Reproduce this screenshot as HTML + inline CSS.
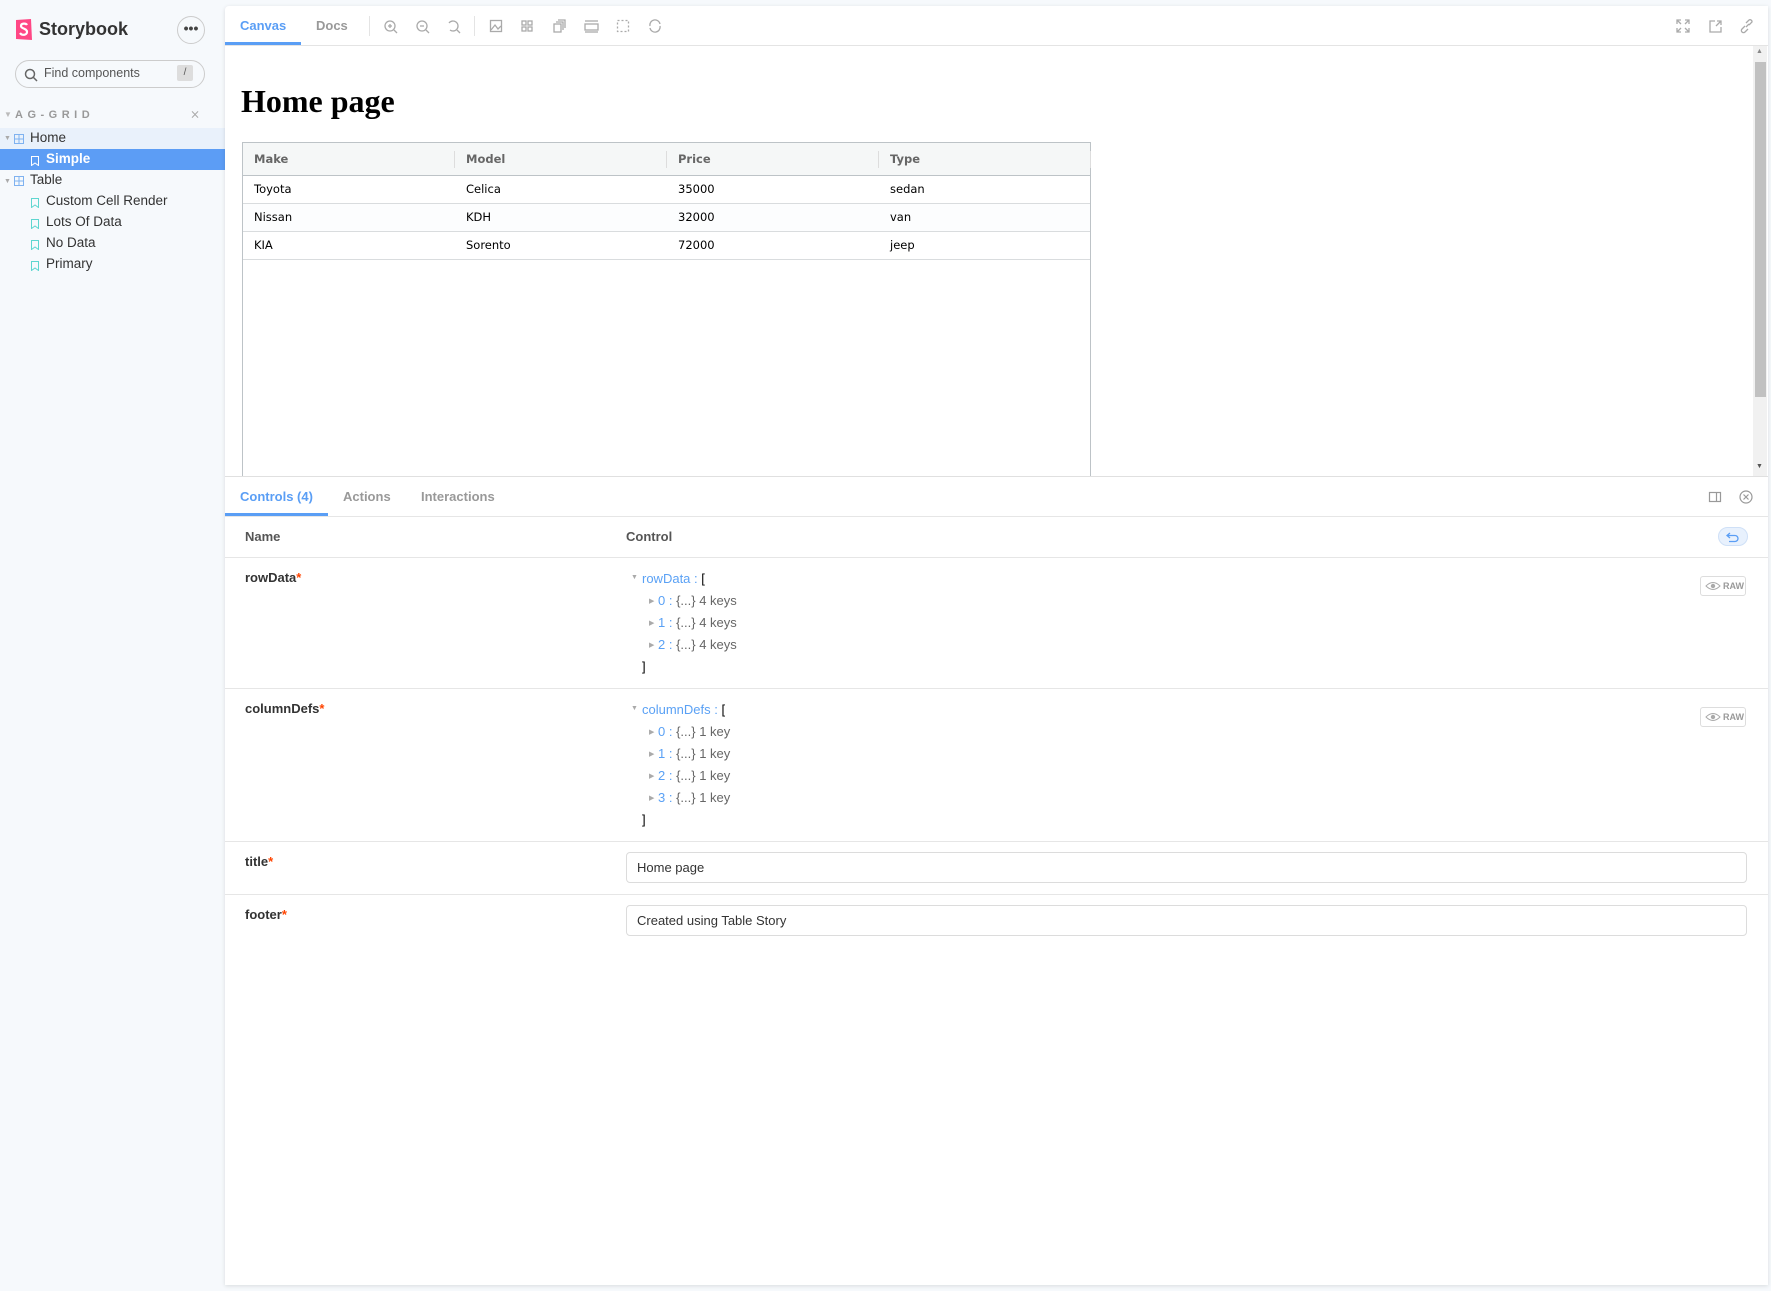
<!DOCTYPE html>
<html><head><meta charset="utf-8"><style>
*{box-sizing:border-box;margin:0;padding:0}
body{width:1771px;height:1291px;background:#f6f9fc;font-family:"Liberation Sans",sans-serif;position:relative;overflow:hidden;color:#333}
.a{position:absolute}
.main{left:225px;top:6px;width:1543px;height:1279px;background:#fff;box-shadow:0 1px 4px rgba(0,0,0,.12);border-radius:4px 0 0 0}
.tb{font-size:13px;font-weight:bold}
.side{font-size:13px;color:#333}
.row{position:absolute;left:0;width:225px;height:21px;line-height:21px}
.grid{left:242px;top:142px;width:849px;height:334px;border:1px solid #bdc3c7;border-bottom:none;font-family:"DejaVu Sans","Liberation Sans",sans-serif;font-size:11.5px;color:#000}
.gh{position:absolute;left:0;top:0;width:847px;height:33px;background:#f5f7f7;border-bottom:1px solid #bdc3c7;color:#666;font-weight:bold}
.gr{position:absolute;left:0;width:847px;height:28px;border-bottom:1px solid #d9dcde;line-height:27px}
.c{position:absolute;top:0}
.lbl{font-size:13px;font-weight:bold;color:#333}
.j{position:absolute;font-size:13px;color:#666;white-space:nowrap}
.k{color:#5aa1f5}
.sep{position:absolute;left:225px;width:1543px;height:1px;background:#e6e6e6}
.inp{position:absolute;left:626px;width:1121px;height:31px;border:1px solid #dcdcdc;border-radius:4px;font-size:13px;line-height:29px;padding-left:10px;color:#333}
</style></head><body>
<svg class="a" style="left:15px;top:19px" width="18" height="22" viewBox="0 0 18 22"><path d="M1 1 L16 0 L17 21 L1 20 Z" fill="#ff4785"/><path d="M12 6 C11 4 6 4 6 7 C6 10 12 9 12 13 C12 16 7 17 5 14" stroke="#fff" stroke-width="2.2" fill="none"/></svg>
<div class="a" style="left:39px;top:19px;font-size:18px;font-weight:bold;color:#333">Storybook</div>
<div class="a" style="left:177px;top:16px;width:28px;height:28px;border:1px solid #ccc;border-radius:50%;text-align:center;line-height:22px;font-size:14px;font-weight:bold;color:#444">•••</div>
<div class="a" style="left:15px;top:60px;width:190px;height:28px;border:1px solid #ccc;border-radius:14px;background:#f6f9fc"></div>
<svg class="a" style="left:24px;top:68px" width="14" height="14"><circle cx="6" cy="6" r="4.5" stroke="#666" stroke-width="1.5" fill="none"/><line x1="9.5" y1="9.5" x2="13" y2="13" stroke="#666" stroke-width="1.5"/></svg>
<div class="a" style="left:44px;top:66px;font-size:12.5px;color:#555">Find components</div>
<div class="a" style="left:177px;top:65px;width:16px;height:16px;background:#ddd;border-radius:2px;font-size:10px;text-align:center;line-height:16px;color:#555">/</div>
<div class="a" style="left:4px;top:110px;font-size:8px;color:#bbb">▼</div>
<div class="a" style="left:15px;top:109px;font-size:11px;font-weight:bold;color:#999;letter-spacing:4.5px">AG-GRID</div>
<div class="a" style="left:190px;top:107px;font-size:12px;color:#aaa">⨯</div>
<div class="row" style="top:128px;background:#e9f1fb"></div>
<div class="row" style="top:149px;background:#5c9df5"></div>
<div class="a side" style="left:4px;top:135px;font-size:7px;color:#aaa">▼</div>
<div class="a side" style="left:4px;top:178px;font-size:7px;color:#aaa">▼</div>
<svg class="a" style="left:14px;top:134px" width="10" height="10"><rect x=".5" y=".5" width="9" height="9" fill="none" stroke="#7fb2f0"/><line x1="5" y1="0" x2="5" y2="10" stroke="#7fb2f0"/><line x1="0" y1="5" x2="10" y2="5" stroke="#7fb2f0"/></svg>
<svg class="a" style="left:14px;top:176px" width="10" height="10"><rect x=".5" y=".5" width="9" height="9" fill="none" stroke="#7fb2f0"/><line x1="5" y1="0" x2="5" y2="10" stroke="#7fb2f0"/><line x1="0" y1="5" x2="10" y2="5" stroke="#7fb2f0"/></svg>
<div class="a side" style="left:30px;top:130px;font-size:13.5px">Home</div>
<div class="a side" style="left:46px;top:151px;font-size:13.5px;color:#fff;font-weight:bold">Simple</div>
<div class="a side" style="left:30px;top:172px;font-size:13.5px">Table</div>
<div class="a side" style="left:46px;top:193px;font-size:13.5px">Custom Cell Render</div>
<div class="a side" style="left:46px;top:214px;font-size:13.5px">Lots Of Data</div>
<div class="a side" style="left:46px;top:235px;font-size:13.5px">No Data</div>
<div class="a side" style="left:46px;top:256px;font-size:13.5px">Primary</div>
<svg class="a" style="left:31px;top:156px" width="8" height="10"><path d="M.5 .5H7.5V9.5L4 7L.5 9.5Z" fill="none" stroke="#fff"/></svg>
<svg class="a" style="left:31px;top:198px" width="8" height="10"><path d="M.5 .5H7.5V9.5L4 7L.5 9.5Z" fill="none" stroke="#5ed6d0"/></svg>
<svg class="a" style="left:31px;top:219px" width="8" height="10"><path d="M.5 .5H7.5V9.5L4 7L.5 9.5Z" fill="none" stroke="#5ed6d0"/></svg>
<svg class="a" style="left:31px;top:240px" width="8" height="10"><path d="M.5 .5H7.5V9.5L4 7L.5 9.5Z" fill="none" stroke="#5ed6d0"/></svg>
<svg class="a" style="left:31px;top:261px" width="8" height="10"><path d="M.5 .5H7.5V9.5L4 7L.5 9.5Z" fill="none" stroke="#5ed6d0"/></svg>

<div class="a main"></div>
<div class="a" style="left:225px;top:45px;width:1543px;height:1px;background:#e4e4e4"></div>
<div class="a tb" style="left:240px;top:18px;color:#5a9ef5">Canvas</div>
<div class="a" style="left:225px;top:42px;width:76px;height:3px;background:#5a9ef5"></div>
<div class="a tb" style="left:316px;top:18px;color:#999">Docs</div>
<div class="a" style="left:369px;top:16px;width:1px;height:20px;background:#e4e4e4"></div>
<div class="a" style="left:474px;top:16px;width:1px;height:20px;background:#e4e4e4"></div>
<svg class="a" style="left:383px;top:19px" width="300" height="16" fill="none" stroke="#aaa" stroke-width="1.3">
<circle cx="7" cy="7" r="5"/><line x1="11" y1="11" x2="14" y2="14"/><line x1="5" y1="7" x2="9" y2="7"/><line x1="7" y1="5" x2="7" y2="9"/>
<g transform="translate(32 0)"><circle cx="7" cy="7" r="5"/><line x1="11" y1="11" x2="14" y2="14"/><line x1="5" y1="7" x2="9" y2="7"/></g>
<g transform="translate(63 0)"><path d="M3 4A5 5 0 1 1 4 11"/><line x1="11" y1="11" x2="14" y2="14"/></g>
<g transform="translate(106 0)"><rect x="1.5" y="1.5" width="11" height="11"/><path d="M2 11L6 6L9 10L12 7"/></g>
<g transform="translate(137 0)"><rect x="2" y="2" width="4" height="4"/><rect x="8" y="2" width="4" height="4"/><rect x="2" y="8" width="4" height="4"/><rect x="8" y="8" width="4" height="4"/></g>
<g transform="translate(169 0)"><rect x="2" y="5" width="7" height="8"/><path d="M4 3H11V11M6 1H13V9"/></g>
<g transform="translate(201 0)"><rect x="1" y="5" width="13" height="6"/><line x1="1" y1="2" x2="14" y2="2"/><line x1="1" y1="13" x2="14" y2="13"/></g>
<g transform="translate(233 0)"><rect x="1.5" y="1.5" width="11" height="11" stroke-dasharray="2 2"/></g>
<g transform="translate(265 0)"><path d="M2 7A5 5 0 0 1 12 5M12 7A5 5 0 0 1 2 9"/></g>
</svg>
<svg class="a" style="left:1676px;top:19px" width="80" height="16" fill="none" stroke="#aaa" stroke-width="1.3">
<path d="M1 5V1H5M9 1H13V5M13 9V13H9M5 13H1V9M1 1L5 5M13 1L9 5M13 13L9 9M1 13L5 9"/>
<g transform="translate(32 0)"><path d="M7 2H2V13H13V8M8 7L13 2M9 2H13V6"/></g>
<g transform="translate(64 0)"><path d="M6 8L9 5M5 7L2 10A2 2 0 0 0 5 13L8 10M9 6L12 3A2 2 0 0 0 9 1L6 4"/></g>
</svg>
<div class="a" style="left:241px;top:83px;font-family:'Liberation Serif',serif;font-size:32px;font-weight:bold;color:#000">Home page</div>
<div class="a grid">
 <div class="gh"><div class="c" style="left:11px;top:9px">Make</div><div class="c" style="left:223px;top:9px">Model</div><div class="c" style="left:435px;top:9px">Price</div><div class="c" style="left:647px;top:9px">Type</div>
 <div class="c" style="left:211px;top:8px;width:1px;height:17px;background:#ddd"></div><div class="c" style="left:423px;top:8px;width:1px;height:17px;background:#ddd"></div><div class="c" style="left:635px;top:8px;width:1px;height:17px;background:#ddd"></div><div class="c" style="left:847px;top:8px;width:1px;height:17px;background:#ddd"></div></div>
 <div class="gr" style="top:33px"><div class="c" style="left:11px">Toyota</div><div class="c" style="left:223px">Celica</div><div class="c" style="left:435px">35000</div><div class="c" style="left:647px">sedan</div></div>
 <div class="gr" style="top:61px;background:#fcfdfe"><div class="c" style="left:11px">Nissan</div><div class="c" style="left:223px">KDH</div><div class="c" style="left:435px">32000</div><div class="c" style="left:647px">van</div></div>
 <div class="gr" style="top:89px"><div class="c" style="left:11px">KIA</div><div class="c" style="left:223px">Sorento</div><div class="c" style="left:435px">72000</div><div class="c" style="left:647px">jeep</div></div>
</div>
<div class="a" style="left:1753px;top:46px;width:14px;height:430px;background:#f1f1f1"></div>
<div class="a" style="left:1755px;top:62px;width:11px;height:335px;background:#c1c1c1"></div>
<div class="a" style="left:1756px;top:48px;font-size:7px;color:#888">▲</div>
<div class="a" style="left:1756px;top:463px;font-size:7px;color:#555">▼</div>
<div class="sep" style="top:476px;background:#e0e0e0"></div>
<div class="a tb" style="left:240px;top:489px;color:#5a9ef5">Controls (4)</div>
<div class="a tb" style="left:343px;top:489px;color:#999">Actions</div>
<div class="a tb" style="left:421px;top:489px;color:#999">Interactions</div>
<div class="a" style="left:225px;top:513px;width:103px;height:3px;background:#5a9ef5"></div>
<div class="sep" style="top:516px"></div>
<svg class="a" style="left:1708px;top:490px" width="50" height="14" fill="none" stroke="#999" stroke-width="1.2"><rect x="1.5" y="2.5" width="11" height="9"/><line x1="8.5" y1="2" x2="8.5" y2="12"/><circle cx="38" cy="7" r="6"/><path d="M35.5 4.5L40.5 9.5M40.5 4.5L35.5 9.5"/></svg>
<div class="a lbl" style="left:245px;top:529px;color:#555">Name</div>
<div class="a lbl" style="left:626px;top:529px;color:#555">Control</div>
<div class="a" style="left:1718px;top:527px;width:30px;height:19px;border-radius:10px;background:#e8f1fd;border:1px solid #cfe0f7"></div>
<svg class="a" style="left:1726px;top:531px" width="14" height="12" fill="none" stroke="#5a9ef5" stroke-width="1.3"><path d="M4 2L1 4.5L4 7M1 4.5H9A3 3 0 0 1 9 10.5H3"/></svg>
<div class="sep" style="top:557px"></div>
<div class="a lbl" style="left:245px;top:570px">rowData<span style="color:#ff4400">*</span></div>
<div class="j" style="left:631px;top:574px;font-size:7px;color:#aaa">▼</div>
<div class="j" style="left:642px;top:571px"><span class="k">rowData :</span> <span style="color:#000">[</span></div>
<div class="j" style="left:649px;top:597px;font-size:7px;color:#aaa">▶</div><div class="j" style="left:658px;top:593px"><span class="k">0 :</span> {...} 4 keys</div>
<div class="j" style="left:649px;top:619px;font-size:7px;color:#aaa">▶</div><div class="j" style="left:658px;top:615px"><span class="k">1 :</span> {...} 4 keys</div>
<div class="j" style="left:649px;top:641px;font-size:7px;color:#aaa">▶</div><div class="j" style="left:658px;top:637px"><span class="k">2 :</span> {...} 4 keys</div>
<div class="j" style="left:642px;top:659px;color:#000">]</div>
<div class="a" style="left:1700px;top:576px;width:46px;height:20px;border:1px solid #ddd;border-radius:3px;font-size:9px;font-weight:bold;color:#999;line-height:18px;padding-left:22px">RAW</div>
<svg class="a" style="left:1705px;top:581px" width="16" height="10"><path d="M1 5Q8 -2 15 5Q8 12 1 5Z" fill="none" stroke="#aaa"/><circle cx="8" cy="5" r="2.2" fill="#aaa"/></svg>
<div class="sep" style="top:688px"></div>
<div class="a lbl" style="left:245px;top:701px">columnDefs<span style="color:#ff4400">*</span></div>
<div class="j" style="left:631px;top:705px;font-size:7px;color:#aaa">▼</div>
<div class="j" style="left:642px;top:702px"><span class="k">columnDefs :</span> <span style="color:#000">[</span></div>
<div class="j" style="left:649px;top:728px;font-size:7px;color:#aaa">▶</div><div class="j" style="left:658px;top:724px"><span class="k">0 :</span> {...} 1 key</div>
<div class="j" style="left:649px;top:750px;font-size:7px;color:#aaa">▶</div><div class="j" style="left:658px;top:746px"><span class="k">1 :</span> {...} 1 key</div>
<div class="j" style="left:649px;top:772px;font-size:7px;color:#aaa">▶</div><div class="j" style="left:658px;top:768px"><span class="k">2 :</span> {...} 1 key</div>
<div class="j" style="left:649px;top:794px;font-size:7px;color:#aaa">▶</div><div class="j" style="left:658px;top:790px"><span class="k">3 :</span> {...} 1 key</div>
<div class="j" style="left:642px;top:812px;color:#000">]</div>
<div class="a" style="left:1700px;top:707px;width:46px;height:20px;border:1px solid #ddd;border-radius:3px;font-size:9px;font-weight:bold;color:#999;line-height:18px;padding-left:22px">RAW</div>
<svg class="a" style="left:1705px;top:712px" width="16" height="10"><path d="M1 5Q8 -2 15 5Q8 12 1 5Z" fill="none" stroke="#aaa"/><circle cx="8" cy="5" r="2.2" fill="#aaa"/></svg>
<div class="sep" style="top:841px"></div>
<div class="a lbl" style="left:245px;top:854px">title<span style="color:#ff4400">*</span></div>
<div class="inp" style="top:852px">Home page</div>
<div class="sep" style="top:894px"></div>
<div class="a lbl" style="left:245px;top:907px">footer<span style="color:#ff4400">*</span></div>
<div class="inp" style="top:905px">Created using Table Story</div>
</body></html>
